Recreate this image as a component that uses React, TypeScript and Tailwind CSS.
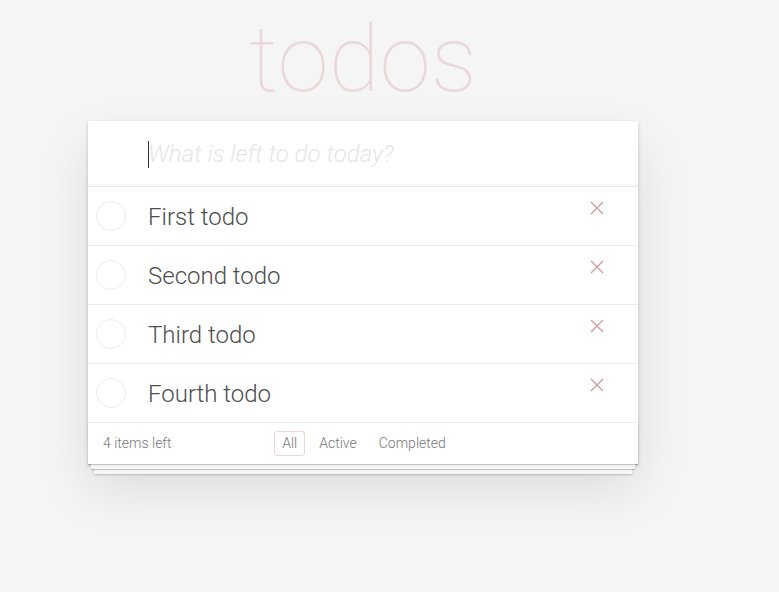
import React from 'react';

const todos = ['First todo', 'Second todo', 'Third todo', 'Fourth todo'];

const font = { fontFamily: 'Roboto, "Helvetica Neue", Helvetica, Arial, sans-serif' };

const TodoItem: React.FC<{ title: string }> = ({ title }) => (
  <li className="relative flex items-center h-[59px] border-b border-[#ededed]">
    <span className="ml-[8px] w-[30px] h-[30px] rounded-full border border-[#ededed] shrink-0" />
    <label className="ml-[22px] flex-1 pt-[2px] text-[24px] leading-[1.2] font-light text-[#4d4d4d]">{title}</label>
    {/* destroy button */}
    <button className="self-start mt-[14px] mr-[34px] w-[14px] h-[14px] text-[#cc9a9a]">
      <svg viewBox="0 0 14 14" className="w-[14px] h-[14px]">
        <path d="M1 1 L13 13 M13 1 L1 13" stroke="currentColor" strokeWidth="1.3" fill="none" />
      </svg>
    </button>
  </li>
);

export default function App() {
  return (
    <div className="min-h-[592px] bg-[#f5f5f5] pt-[13px]" style={font}>
      <div className="ml-[88px] w-[550px]">
        <h1 className="text-center text-[93px] leading-none font-thin text-[rgba(175,47,47,0.15)] h-[93px] mb-[15px]">
          todos
        </h1>
        <section className="bg-white shadow-[0_2px_4px_0_rgba(0,0,0,0.2),0_25px_50px_0_rgba(0,0,0,0.1)]">
          <div className="relative">
            <input
              className="block w-full h-[65px] pl-[60px] pr-4 text-[24px] font-light text-[#4d4d4d] outline-none bg-transparent caret-transparent shadow-[inset_0_-2px_1px_rgba(0,0,0,0.03)] placeholder:italic placeholder:text-[#e6e6e6]"
              placeholder="What is left to do today?"
            />
            {/* caret */}
            <span className="absolute left-[60px] top-[20px] w-px h-[27px] bg-[#333]" />
          </div>
          <ul className="border-t border-[#e6e6e6]">
            {todos.map(t => (
              <TodoItem key={t} title={t} />
            ))}
          </ul>
          <footer className="grid grid-cols-[1fr_auto_1fr] items-center h-[41px] px-[15px] text-[14px] text-[#777] shadow-[0_1px_1px_rgba(0,0,0,0.2),0_8px_0_-3px_#f6f6f6,0_9px_1px_-3px_rgba(0,0,0,0.2),0_16px_0_-6px_#f6f6f6,0_17px_2px_-6px_rgba(0,0,0,0.2)]">
            <span className="font-light">4 items left</span>
            <ul className="flex font-light ml-[2px]">
              <li><a className="block m-[3px] px-[7px] py-[3px] leading-[17px] border border-[rgba(175,47,47,0.2)] rounded-[3px]">All</a></li>
              <li><a className="block m-[3px] px-[7px] py-[3px] leading-[17px] border border-transparent rounded-[3px]">Active</a></li>
              <li><a className="block m-[3px] px-[7px] py-[3px] leading-[17px] border border-transparent rounded-[3px]">Completed</a></li>
            </ul>
            <span />
          </footer>
        </section>
      </div>
    </div>
  );
}
